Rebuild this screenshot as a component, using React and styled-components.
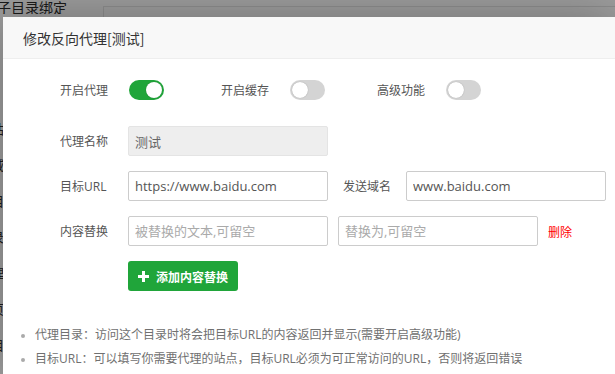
import styled, { createGlobalStyle } from "styled-components";

const GlobalStyle = createGlobalStyle`
  html, body {
    margin: 0;
    padding: 0;
    overflow: hidden;
  }
  body {
    font-family: "Open Sans", "Noto Sans CJK SC", sans-serif;
    color: #555;
  }
`;

const sideItems = ["站", "域", "目", "录", "理", "页", "目"];

function Toggle({ on }) {
  return (
    <Track on={on ? 1 : 0}>
      <Knob on={on ? 1 : 0} />
    </Track>
  );
}

function PlusIcon() {
  return (
    <svg width="11" height="11" viewBox="0 0 11 11">
      <rect x="4" y="0" width="3" height="11" fill="#fff" />
      <rect x="0" y="4" width="11" height="3" fill="#fff" />
    </svg>
  );
}

export default function App() {
  return (
    <>
      <GlobalStyle />
      <Page>
        <PageTop>
          <PageTab>子目录绑定</PageTab>
          <PageField />
        </PageTop>
        <SideList>
          {sideItems.map((s, i) => (
            <SideItem key={i}>{s}</SideItem>
          ))}
        </SideList>
      </Page>

      <Modal>
        <ModalHeader>修改反向代理[测试]</ModalHeader>
        <ModalBody>
          <SwitchRow>
            <SwitchGroup width={161}>
              <Label>开启代理</Label>
              <Toggle on />
            </SwitchGroup>
            <SwitchGroup width={156}>
              <Label>开启缓存</Label>
              <Toggle />
            </SwitchGroup>
            <SwitchGroup width={156}>
              <Label>高级功能</Label>
              <Toggle />
            </SwitchGroup>
          </SwitchRow>

          <FormRow>
            <Label>代理名称</Label>
            <Input value="测试" disabled readOnly />
          </FormRow>

          <FormRow>
            <Label>目标URL</Label>
            <Input defaultValue="https://www.baidu.com" />
            <Label narrow>发送域名</Label>
            <Input defaultValue="www.baidu.com" />
          </FormRow>

          <FormRow>
            <Label>内容替换</Label>
            <Input placeholder="被替换的文本,可留空" />
            <Input placeholder="替换为,可留空" />
            <DeleteLink>删除</DeleteLink>
          </FormRow>

          <FormRow>
            <Label />
            <AddButton>
              <PlusIcon />
              添加内容替换
            </AddButton>
          </FormRow>

          <Tips>
            <li>代理目录：访问这个目录时将会把目标URL的内容返回并显示(需要开启高级功能)</li>
            <li>目标URL：可以填写你需要代理的站点，目标URL必须为可正常访问的URL，否则将返回错误</li>
          </Tips>
        </ModalBody>
      </Modal>
    </>
  );
}

const Page = styled.div`
  position: relative;
  width: 615px;
  height: 374px;
  background: #fff;
  overflow: hidden;

  &::after {
    content: "";
    position: absolute;
    inset: 0;
    background: rgba(0, 0, 0, 0.38);
  }
`;

const PageTop = styled.div`
  display: flex;
  align-items: flex-start;
  height: 17px;
`;

const PageTab = styled.div`
  width: 103px;
  font-size: 14px;
  line-height: 14px;
  color: #2c2c2c;
  font-family: "Noto Sans CJK SC", sans-serif;
  text-indent: -3px;
  white-space: nowrap;
  overflow: hidden;
`;

const PageField = styled.div`
  flex: 1;
  margin-top: 6px;
  height: 11px;
  border-top: 1px solid #e6e6e6;
  border-left: 1px solid #e6e6e6;
`;

const SideList = styled.div`
  display: flex;
  flex-direction: column;
  gap: 22px;
  width: 4px;
  margin-top: 105px;
  overflow: hidden;
`;

const SideItem = styled.div`
  font-size: 13px;
  line-height: 14px;
  color: #333;
  font-family: "Noto Sans CJK SC", sans-serif;
  text-indent: -9px;
  white-space: nowrap;
`;

const Modal = styled.div`
  position: absolute;
  left: 3px;
  top: 17px;
  width: 612px;
  height: 357px;
  overflow: hidden;
  background: #fff;
  box-shadow: 1px 1px 50px rgba(0, 0, 0, 0.3);
  z-index: 2;
`;

const ModalHeader = styled.div`
  height: 41px;
  line-height: 42px;
  padding-left: 20px;
  background: #f8f8f8;
  border-bottom: 1px solid #eee;
  font-size: 14px;
  color: #333;
  font-family: "Noto Sans CJK SC", sans-serif;
`;

const ModalBody = styled.div`
  padding: 16px 0 0 57px;
`;

const SwitchRow = styled.div`
  display: flex;
  align-items: center;
  height: 30px;
  margin-bottom: 21px;
`;

const SwitchGroup = styled.div`
  display: flex;
  align-items: center;
  width: ${({ width }) => width}px;
`;

const Label = styled.span`
  flex: none;
  width: ${({ narrow }) => (narrow ? "63px" : "68px")};
  margin-left: ${({ narrow }) => (narrow ? "5px" : "0")};
  font-size: 12px;
  color: #555;
  font-family: "Open Sans", "Noto Sans CJK SC", sans-serif;
`;

const Track = styled.span`
  position: relative;
  display: inline-block;
  width: 35px;
  height: 20px;
  border-radius: 10px;
  background: ${({ on }) => (on ? "#20a53a" : "#d4d4d4")};
  margin-left: 1px;
`;

const Knob = styled.span`
  position: absolute;
  top: 2px;
  left: ${({ on }) => (on ? "17px" : "2px")};
  width: 16px;
  height: 16px;
  border-radius: 50%;
  background: #fff;
  box-shadow: 0 0 1px rgba(0, 0, 0, 0.35);
`;

const FormRow = styled.div`
  display: flex;
  align-items: center;
  height: 30px;
  margin-bottom: 15px;
`;

const Input = styled.input`
  box-sizing: border-box;
  flex: none;
  width: 200px;
  height: 30px;
  margin-right: 10px;
  padding: 0 6px;
  border: 1px solid #ccc;
  border-radius: 2px;
  font-family: "Open Sans", "Noto Sans CJK SC", sans-serif;
  font-size: 13px;
  color: #555;
  background: #fff;
  outline: none;

  &:disabled {
    background: #eee;
    border-color: #e4e4e4;
    color: #666;
  }

  &::placeholder {
    color: #aaa;
  }
`;

const DeleteLink = styled.a`
  font-size: 12px;
  color: #f00;
  cursor: pointer;
  font-family: "Noto Sans CJK SC", sans-serif;
`;

const AddButton = styled.button`
  display: flex;
  align-items: center;
  gap: 7px;
  height: 30px;
  padding: 0 10px;
  border: none;
  border-radius: 3px;
  background: #20a53a;
  color: #fff;
  font-size: 12px;
  font-weight: 600;
  font-family: "Noto Sans CJK SC", sans-serif;
  cursor: pointer;
`;

const Tips = styled.ul`
  margin: 32px 0 0 -55px;
  padding: 0 0 0 30px;
  color: #707070;
  font-size: 12px;
  line-height: 24px;
  font-family: "Open Sans", "Noto Sans CJK SC", sans-serif;

  li::marker {
    color: #aaa;
    font-size: 10px;
  }
`;
